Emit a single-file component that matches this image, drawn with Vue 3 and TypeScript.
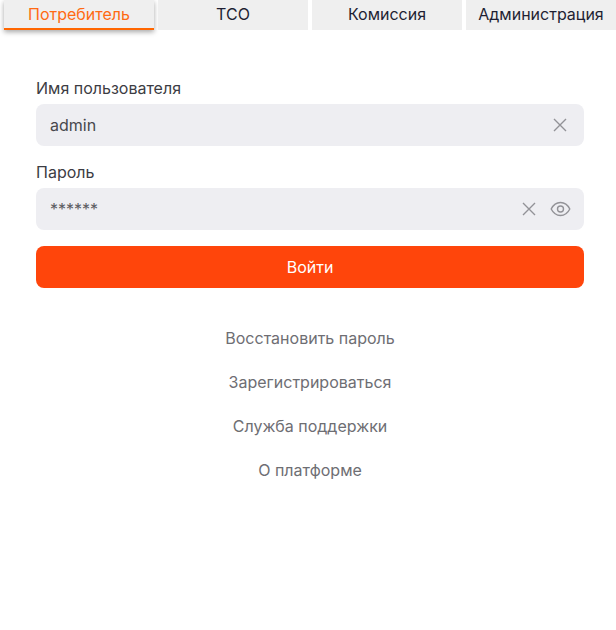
<script setup lang="ts">
const tabs = ['Потребитель', 'TCO', 'Комиссия', 'Администрация']
const links = ['Восстановить пароль', 'Зарегистрироваться', 'Служба поддержки', 'О платформе']
</script>

<template>
  <div class="page">
    <nav class="tabs">
      <div v-for="(t, i) in tabs" :key="t" class="tab" :class="{ active: i === 0 }">{{ t }}</div>
    </nav>
    <form class="form" @submit.prevent>
      <label class="label">Имя пользователя</label>
      <div class="field">
        <span class="value">admin</span>
        <svg class="icon" width="16" height="16" viewBox="0 0 16 16"><path d="M2 2 14 14M14 2 2 14" /></svg>
      </div>
      <label class="label second">Пароль</label>
      <div class="field pw">
        <span class="value stars">******</span>
        <svg class="icon" width="16" height="16" viewBox="0 0 16 16"><path d="M2 2 14 14M14 2 2 14" /></svg>
        <svg class="eye" width="22" height="18" viewBox="0 0 22 18">
          <path d="M2.200 9C4.200 5 7.500 2.500 11.500 2.500S18.800 5 20.800 9C18.800 13 15.500 15.500 11.500 15.500S4.200 13 2.200 9Z" />
          <circle cx="11.500" cy="9" r="3" />
        </svg>
      </div>
      <button class="submit" type="button">Войти</button>
    </form>
    <div class="links">
      <a v-for="l in links" :key="l" class="link">{{ l }}</a>
    </div>
  </div>
</template>

<style scoped>
.page {
  width: 616px;
  height: 630px;
  background: #fff;
  font-family: Inter, "Noto Sans", sans-serif;
  overflow: hidden;
}
.tabs {
  display: grid;
  grid-template-columns: 150px 150px 150px 150px;
  column-gap: 4px;
  padding-left: 4px;
}
.tab {
  height: 30px;
  box-sizing: border-box;
  background: #efefef;
  color: #1f1f33;
  font-size: 16px;
  line-height: 28px;
  text-align: center;
  white-space: nowrap;
}
.tab.active {
  color: #ff6a13;
  border-bottom: 2px solid #ff6600;
  box-shadow: 0 2px 5px rgba(0, 0, 0, 0.35);
}
.form {
  display: flex;
  flex-direction: column;
  margin: 48px 32px 0 36px;
}
.label {
  font-size: 16px;
  line-height: 20px;
  color: #3c3c43;
  margin-bottom: 6px;
}
.label.second {
  margin-top: 16px;
}
.field {
  height: 42px;
  border-radius: 8px;
  background: #eeeef2;
  display: flex;
  align-items: center;
  padding: 0 16px 0 14px;
  gap: 12px;
}
.field.pw {
  padding-right: 13px;
  gap: 12px;
}
.value {
  flex: 1;
  font-size: 16px;
  color: #48484d;
}
.stars {
  color: #5c5c61;
}
.icon path {
  fill: none;
  stroke: #929297;
  stroke-width: 1.4;
}
.eye path,
.eye circle {
  fill: none;
  stroke: #929297;
  stroke-width: 1.4;
}
.submit {
  margin-top: 16px;
  height: 42px;
  border: none;
  border-radius: 8px;
  background: #ff450b;
  color: #fff;
  font: inherit;
  font-size: 16px;
  padding: 0;
}
.links {
  display: flex;
  flex-direction: column;
  align-items: center;
  gap: 24px;
  margin: 40px 32px 0 36px;
}
.link {
  font-size: 16px;
  line-height: 20px;
  color: #6e6e73;
}
</style>
